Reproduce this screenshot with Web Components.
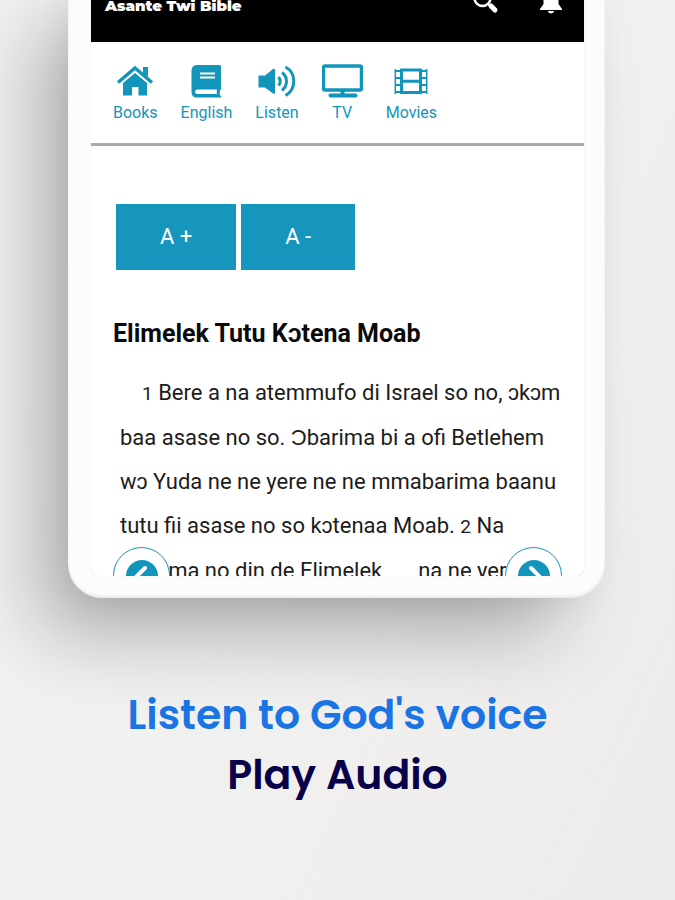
<!DOCTYPE html>
<html lang="tw">
<head>
<meta charset="utf-8">
<meta name="viewport" content="width=device-width, initial-scale=1">
<title>Asante Twi Bible</title>
<style>
  html, body { margin: 0; height: 100%; }
  body { overflow: hidden; font-family: Roboto, "Liberation Sans", sans-serif; }
</style>
</head>
<body>
<promo-slide>
  <device-frame>
    <app-bar>Asante Twi Bible</app-bar>
    <app-nav>
      <nav-item icon="home">Books</nav-item>
      <nav-item icon="book">English</nav-item>
      <nav-item icon="speaker">Listen</nav-item>
      <nav-item icon="tv">TV</nav-item>
      <nav-item icon="film">Movies</nav-item>
    </app-nav>
    <bible-chapter heading="Elimelek Tutu Kɔtena Moab">
      <bible-verse number="1">Bere a na atemmufo di Israel so no, ɔkɔm<br>baa asase no so. Ɔbarima bi a ofi Betlehem<br>wɔ Yuda ne ne yere ne ne mmabarima baanu<br>tutu fii asase no so kɔtenaa Moab.</bible-verse>
      <bible-verse number="2">Na<br>ɔbarima no din de Elimelek<verse-gap></verse-gap>na ne yere</bible-verse>
    </bible-chapter>
    <page-turn slot="overlay" direction="previous"></page-turn>
    <page-turn slot="overlay" direction="next"></page-turn>
  </device-frame>
  <promo-caption slot="caption" lead="Listen to God's voice">Play Audio</promo-caption>
</promo-slide>

<script>
const ICONS = {
  home: `<svg width="38" height="34" viewBox="0 0 38 34" fill="currentColor" aria-hidden="true">
    <path d="M19 9 31 19V31.500H22.500V23H16V31.500H7V19Z"/>
    <path d="M2 18.500 19 4 36 18.500" fill="none" stroke="currentColor" stroke-width="3.500"/>
    <path d="M27 3h5v10l-5-4z"/>
  </svg>`,
  book: `<svg width="30" height="34" viewBox="0 0 30 34" aria-hidden="true">
    <path fill="currentColor" d="M6 1H28.500Q30 1 30 2.500V24.500Q30 25.500 29 26.200Q28.300 29 29 31.300Q30 32 30 32.500V33.500H6Q.500 33.500 .500 28V7Q.500 1 6 1Z"/>
    <path fill="#fff" d="M6.500 25.500H26Q25.300 28 26 30H6.500Q4 30 4 27.700Q4 25.500 6.500 25.500Z"/>
    <path stroke="#fff" stroke-width="2" d="M9 9.500H24M9 13.500H24"/>
  </svg>`,
  speaker: `<svg width="38" height="34" viewBox="0 0 38 34" fill="none" stroke="currentColor" stroke-width="3" aria-hidden="true">
    <path fill="currentColor" stroke="none" d="M.500 11.500H7L15 5Q17 4 17 6V28.500Q17 30.500 15 29.500L7 23.500H.500Z"/>
    <path d="M20.500 13Q24 17.500 20.500 21.500M24 8.500C30 13 30 21.500 24 26.500M27.500 3C38.500 9 38.500 25.500 27.500 31.500"/>
  </svg>`,
  tv: `<svg width="41" height="34" viewBox="0 0 41 34" fill="none" stroke="currentColor" aria-hidden="true">
    <rect x="1.500" y="2" width="38" height="24" rx="1.500" stroke-width="3.500"/>
    <path stroke-width="4" d="M20.500 26V31"/>
    <path stroke-width="4" stroke-linecap="round" d="M8.500 31.500H33.500"/>
  </svg>`,
  film: `<svg width="34" height="34" viewBox="0 0 34 34" fill="none" stroke="currentColor" aria-hidden="true">
    <path stroke-width="3" d="M7.500 6H26.500V28.500H7.500ZM7.500 17.300H26.500"/>
    <path stroke-width="1.500" d="M1.300 5V30M32.700 5V30"/>
    <path stroke-width="2" d="M1 7H7M1 14H7M1 21H7M1 28H7M27 7H33M27 14H33M27 21H33M27 28H33"/>
  </svg>`,
  search: `<svg width="28" height="28" viewBox="0 0 28 28" fill="none" stroke="currentColor" aria-hidden="true">
    <circle cx="9.500" cy="11" r="8" stroke-width="2.500"/>
    <path stroke-width="2" d="m15 17 3 3"/>
    <path stroke-width="5" stroke-linecap="round" d="m18 19 4 4"/>
  </svg>`,
  bell: `<svg width="24" height="28" viewBox="0 0 24 28" fill="currentColor" aria-hidden="true">
    <path d="M12 1C7 1 4.500 5 4.500 10V17L1 22V23H23V22L19.500 17V10C19.500 5 17 1 12 1ZM8.500 24Q12 29 15.500 24Z"/>
  </svg>`,
  previous: `<svg width="32" height="32" viewBox="0 0 32 32" aria-hidden="true">
    <circle cx="16" cy="16" r="16" fill="currentColor"/>
    <path fill="none" stroke="#fff" stroke-width="4" stroke-linecap="round" d="M19 8 11 16 19 24"/>
  </svg>`,
  next: `<svg width="32" height="32" viewBox="0 0 32 32" aria-hidden="true">
    <circle cx="16" cy="16" r="16" fill="currentColor"/>
    <path fill="none" stroke="#fff" stroke-width="4" stroke-linecap="round" d="M13 8 21 16 13 24"/>
  </svg>`,
};

/** Base class: renders template() into an open shadow root */
class BaseElement extends HTMLElement {
  connectedCallback() {
    if (this.shadowRoot) return;
    this.attachShadow({ mode: 'open' }).innerHTML = this.template();
  }
}

class PromoSlide extends BaseElement {
  template() {
    return `
      <style>
        :host {
          display: flex;
          flex-direction: column;
          height: 100vh;
          overflow: hidden;
          background: linear-gradient(115deg, #f2f2f2 0%, #f1f1f0 45%, #f0efed 70%, #ebebeb 100%);
        }
        main {
          flex: 1;
          min-height: 0;
          display: flex;
          padding: 0 70px 0 68px;
        }
      </style>
      <main><slot></slot></main>
      <slot name="caption"></slot>
    `;
  }
}

class DeviceFrame extends BaseElement {
  template() {
    return `
      <style>
        /* the top of the device runs off the slide */
        :host {
          flex: 1;
          display: flex;
          margin-top: -30px;
          padding: 0 21px 22px 23px;
          background: #fcfcfc;
          border-radius: 0 0 34px 34px;
          box-shadow:
            inset 0 -2px 3px rgba(0, 0, 0, 0.08),
            -40px 46px 80px -10px rgba(0, 0, 0, 0.28),
            -6px 14px 40px -14px rgba(0, 0, 0, 0.1);
        }
        .screen {
          position: relative;
          flex: 1;
          min-width: 0;
          overflow: hidden;
          background: #fff;
          border-radius: 0 0 8px 8px;
          box-shadow: 0 0 1px rgba(0, 0, 0, 0.2);
        }
        .overlay {
          position: absolute;
          left: 22px;
          right: 22px;
          bottom: -28px;
          display: flex;
          justify-content: space-between;
        }
      </style>
      <div class="screen">
        <slot></slot>
        <div class="overlay"><slot name="overlay"></slot></div>
      </div>
    `;
  }
}

class AppBar extends BaseElement {
  template() {
    return `
      <style>
        :host {
          display: flex;
          align-items: center;
          box-sizing: border-box;
          height: 72px;
          padding: 0 21px 0 14px;
          background: #000;
          color: #fff;
        }
        h1 {
          flex: 1;
          margin: 0;
          font: 900 15px/20px Montserrat, Inter, sans-serif;
        }
        .actions {
          display: flex;
          gap: 38px;
          padding-bottom: 10px;
        }
        button {
          display: flex;
          padding: 0;
          border: 0;
          background: none;
          color: inherit;
        }
      </style>
      <h1><slot></slot></h1>
      <div class="actions">
        <button aria-label="Search">${ICONS.search}</button>
        <button aria-label="Notifications">${ICONS.bell}</button>
      </div>
    `;
  }
}

class AppNav extends BaseElement {
  template() {
    return `
      <style>
        :host { display: block; border-bottom: 3px solid #aaa; }
        nav { display: flex; gap: 23px; padding: 22px 22px 20px; }
      </style>
      <nav><slot></slot></nav>
    `;
  }
}

class NavItem extends BaseElement {
  template() {
    return `
      <style>
        :host { display: block; }
        a {
          display: flex;
          flex-direction: column;
          align-items: center;
          gap: 5px;
          color: #1295bb;
          font-size: 16px;
          line-height: 20px;
          text-decoration: none;
        }
        svg { display: block; }
      </style>
      <a href="#">${ICONS[this.getAttribute('icon')]}<span><slot></slot></span></a>
    `;
  }
}

class BibleChapter extends BaseElement {
  #size = 22;

  connectedCallback() {
    super.connectedCallback();
    this.shadowRoot.querySelector('.larger').addEventListener('click', () => this.#resize(1));
    this.shadowRoot.querySelector('.smaller').addEventListener('click', () => this.#resize(-1));
  }

  #resize(step) {
    this.#size += step;
    this.style.setProperty('--verse-size', `${this.#size}px`);
  }

  template() {
    return `
      <style>
        :host { display: block; padding: 58px 0 0 22px; }
        .sizes { display: flex; gap: 5px; padding-left: 3px; }
        button {
          padding: 0 44px;
          border: 0;
          background: #1695bd;
          color: #fff;
          font: 22px/66px Roboto, sans-serif;
        }
        h2 {
          margin: 48px 0 21px;
          font-size: 25px;
          font-weight: 700;
          line-height: 32px;
          color: #0a0a0a;
        }
        p {
          margin: 0;
          padding-left: 7px;
          font-size: var(--verse-size, 22px);
          line-height: 44px;
          text-indent: 22px;
          white-space: nowrap;
          color: #1c1c1c;
        }
      </style>
      <div class="sizes">
        <button class="larger" aria-label="Larger text">A +</button>
        <button class="smaller" aria-label="Smaller text">A -</button>
      </div>
      <h2>${this.getAttribute('heading')}</h2>
      <p><slot></slot></p>
    `;
  }
}

class BibleVerse extends BaseElement {
  template() {
    return `
      <style>
        :host { display: inline; }
        .number { font-size: 19px; }
      </style>
      <span class="number">${this.getAttribute('number')}</span> <slot></slot>
    `;
  }
}

class VerseGap extends BaseElement {
  template() {
    return '<style>:host { display: inline-block; width: 36px; }</style>';
  }
}

class PageTurn extends BaseElement {
  template() {
    const direction = this.getAttribute('direction');
    return `
      <style>
        :host { display: block; }
        button {
          display: flex;
          align-items: center;
          justify-content: center;
          width: 57px;
          height: 57px;
          padding: 0;
          border: 1px solid #1695bd;
          border-radius: 50%;
          background: #fff;
          color: #1295bb;
        }
      </style>
      <button aria-label="${direction} chapter">${ICONS[direction]}</button>
    `;
  }
}

class PromoCaption extends BaseElement {
  template() {
    return `
      <style>
        :host {
          display: block;
          height: 215px;
          padding-top: 87px;
          text-align: center;
          font: 600 41px/60px Poppins, Inter, sans-serif;
          color: #09004a;
        }
        p { margin: 0; }
        .lead { color: #1b74e4; }
      </style>
      <p class="lead">${this.getAttribute('lead')}</p>
      <p><slot></slot></p>
    `;
  }
}

customElements.define('promo-slide', PromoSlide);
customElements.define('device-frame', DeviceFrame);
customElements.define('app-bar', AppBar);
customElements.define('app-nav', AppNav);
customElements.define('nav-item', NavItem);
customElements.define('bible-chapter', BibleChapter);
customElements.define('bible-verse', BibleVerse);
customElements.define('verse-gap', VerseGap);
customElements.define('page-turn', PageTurn);
customElements.define('promo-caption', PromoCaption);
</script>
</body>
</html>
